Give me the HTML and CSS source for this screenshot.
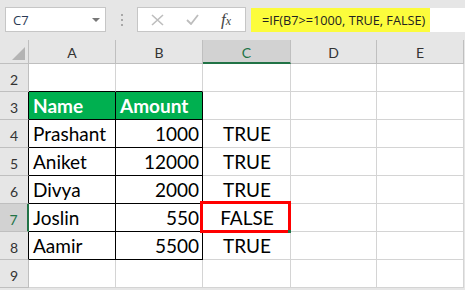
FILE: index.html
```html
<!DOCTYPE html>
<html lang="en">
<head>
  <meta charset="UTF-8" />
  <title>IF formula</title>
  <link rel="stylesheet" href="styles.css">
</head>
<body>
  <div class="toolbar">
    <div class="namebox">
      <span>C7</span>
      <span class="caret"></span>
    </div>
    <div class="grip"><i></i><i></i><i></i></div>
    <div class="fx-tools">
      <svg width="13" height="12" viewBox="0 0 13 12"><path d="M1 1 L12 11 M12 1 L1 11" stroke="#bdbdbd" stroke-width="1.6" fill="none"/></svg>
      <svg width="13" height="11" viewBox="0 0 13 11"><path d="M1 6 L5 10 L12 1" stroke="#bdbdbd" stroke-width="1.8" fill="none"/></svg>
      <span class="fx">f<small>x</small></span>
    </div>
    <div class="formula">
      <span class="hl">=IF(B7&gt;=1000, TRUE, FALSE)</span>
    </div>
  </div>

  <div class="sheet">
    <div class="hd corner"></div>
    <div class="hd col">A</div>
    <div class="hd col">B</div>
    <div class="hd col sel-col">C</div>
    <div class="hd col">D</div>
    <div class="hd col">E</div>

    <div class="hd row">2</div>
    <div class="cell top"></div>
    <div class="cell top"></div>
    <div class="cell"></div>
    <div class="cell"></div>
    <div class="cell"></div>

    <div class="hd row edge">3</div>
    <div class="cell tbl head">Name</div>
    <div class="cell tbl head">Amount</div>
    <div class="cell"></div>
    <div class="cell"></div>
    <div class="cell"></div>

    <div class="hd row edge">4</div>
    <div class="cell tbl">Prashant</div>
    <div class="cell tbl num">1000</div>
    <div class="cell mid">TRUE</div>
    <div class="cell"></div>
    <div class="cell"></div>

    <div class="hd row edge">5</div>
    <div class="cell tbl">Aniket</div>
    <div class="cell tbl num">12000</div>
    <div class="cell mid">TRUE</div>
    <div class="cell"></div>
    <div class="cell"></div>

    <div class="hd row edge">6</div>
    <div class="cell tbl">Divya</div>
    <div class="cell tbl num">2000</div>
    <div class="cell mid">TRUE</div>
    <div class="cell"></div>
    <div class="cell"></div>

    <div class="hd row edge sel-row">7</div>
    <div class="cell tbl">Joslin</div>
    <div class="cell tbl num">550</div>
    <div class="cell mid active">FALSE<span class="handle"></span></div>
    <div class="cell"></div>
    <div class="cell"></div>

    <div class="hd row edge">8</div>
    <div class="cell tbl">Aamir</div>
    <div class="cell tbl num">5500</div>
    <div class="cell mid">TRUE</div>
    <div class="cell"></div>
    <div class="cell"></div>

    <div class="hd row">9</div>
    <div class="cell"></div>
    <div class="cell"></div>
    <div class="cell"></div>
    <div class="cell"></div>
    <div class="cell"></div>
  </div>
</body>
</html>
```

FILE: styles.css
```css
body {
  margin: 0;
  height: 290px;
  background-color: #e6e6e6;
  font-family: Lato, "Liberation Sans", sans-serif;
  overflow: hidden;
}

/* formula bar */
.toolbar {
  display: flex;
  align-items: flex-start;
  height: 40px;
  padding: 7px 0 0 5px;
  box-sizing: border-box;
}

.namebox {
  display: flex;
  align-items: center;
  justify-content: space-between;
  width: 101px;
  height: 25px;
  box-sizing: border-box;
  padding: 0 5px 0 7px;
  background-color: #ffffff;
  border: 1px solid #c6c6c6;
  font-family: "Open Sans", sans-serif;
  font-size: 13px;
  color: #2b3a55;
}

.caret {
  width: 0;
  height: 0;
  border-left: 4px solid transparent;
  border-right: 4px solid transparent;
  border-top: 4px solid #777777;
}

.grip {
  display: flex;
  flex-direction: column;
  gap: 3px;
  width: 31px;
  height: 25px;
  align-items: center;
  justify-content: center;
}

.grip i {
  width: 2px;
  height: 2px;
  background-color: #a8a8a8;
}

.fx-tools {
  display: flex;
  align-items: center;
  width: 109px;
  height: 25px;
  box-sizing: border-box;
  padding: 0 10px 0 13px;
  gap: 22px;
  background-color: #ffffff;
  border: 1px solid #c6c6c6;
}

.fx {
  font-family: "Liberation Serif", serif;
  font-style: italic;
  font-size: 17px;
  line-height: 1;
  color: #444444;
}

.fx small {
  font-size: 12px;
}

.formula {
  display: flex;
  flex: 1;
  height: 24px;
  margin: 1px 0 0 5px;
  background-color: #ffffff;
}

.hl {
  display: flex;
  align-items: center;
  width: 179px;
  box-sizing: border-box;
  padding-left: 11px;
  background-color: #fcfc3c;
  font-family: "Open Sans", sans-serif;
  font-size: 12.7px;
  color: #222222;
  white-space: nowrap;
}

/* sheet */
.sheet {
  display: grid;
  grid-template-columns: 29px 87px 87px 88px 86px 87px;
  grid-template-rows: 24px repeat(9, 28px);
}

.sheet > div {
  box-sizing: border-box;
  border-right: 1px solid #d4d4d4;
  border-bottom: 1px solid #d4d4d4;
}

.hd {
  display: flex;
  align-items: center;
  justify-content: center;
  background-color: #e6e6e6;
  font-size: 14px;
  color: #333333;
}

.sheet > .hd {
  border-color: #bfbfbf;
}

.col {
  padding-top: 2px;
}

.row {
  padding-top: 3px;
}

.corner {
  position: relative;
}

.corner::after {
  content: "";
  position: absolute;
  right: 3px;
  bottom: 3px;
  width: 0;
  height: 0;
  border-left: 13px solid transparent;
  border-bottom: 13px solid #b4b4b4;
}

.sheet > .sel-col {
  background-color: #d2d2d2;
  color: #217346;
  border-bottom: 2px solid #217346;
}

.sheet > .edge {
  border-right-color: #000000;
}

.sheet > .sel-row {
  background-color: #d2d2d2;
  color: #217346;
  border-right: 2px solid #217346;
}

.cell {
  display: flex;
  align-items: flex-end;
  padding: 0 3px 2px 4px;
  background-color: #ffffff;
  font-size: 19px;
  color: #000000;
}

.sheet > .top {
  border-bottom-color: #000000;
}

.sheet > .tbl {
  border-right-color: #000000;
  border-bottom-color: #000000;
}

.head {
  background-color: #00b050;
  color: #ffffff;
  font-weight: bold;
}

.num {
  justify-content: flex-end;
}

.mid {
  justify-content: center;
}

.active {
  position: relative;
}

.active::after {
  content: "";
  position: absolute;
  top: -3px;
  left: -3px;
  right: -1px;
  bottom: -2px;
  border: 3px solid #ff0000;
}

.handle {
  position: absolute;
  right: -1px;
  bottom: -2px;
  width: 3px;
  height: 3px;
  background-color: #217346;
  z-index: 1;
}
```
